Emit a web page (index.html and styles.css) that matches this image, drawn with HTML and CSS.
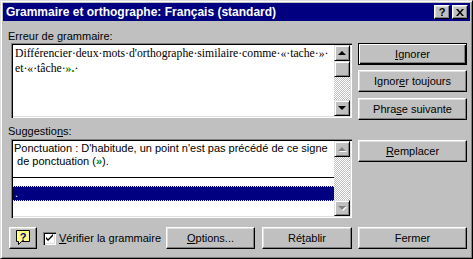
FILE: index.html
```html
<!DOCTYPE html>
<html lang="fr">

<head>
    <meta charset="utf-8">
    <title>Grammaire et orthographe</title>
    <link rel="stylesheet" href="styles.css">
</head>

<body>
    <div class="dialog">
        <div class="titlebar">
            <span class="title">Grammaire et orthographe: Français (standard)</span>
            <div class="caption-btns">
                <span class="cap cap-help">?</span>
                <span class="cap">
                    <svg width="8" height="7" viewBox="0 0 8 7">
                        <path d="M0 0h2l2 2.5 2-2.5h2L5 3.5 8 7H6L4 4.5 2 7H0l3-3.5z" fill="#000"/>
                    </svg>
                </span>
            </div>
        </div>

        <div class="content">
            <div class="main">
                <div class="left">
                    <div class="label">Erreur de <u>g</u>rammaire:</div>
                    <div class="field error-field">
                        <div class="error-text">Différencier·deux·mots·d'orthographe·similaire·comme·«·tache·»·<br>et·«·tâche·<span class="mark">».</span>·</div>
                        <div class="scrollbar">
                            <span class="sb-btn"><i class="arrow-up"></i></span>
                            <span class="sb-btn thumb"></span>
                            <span class="track"></span>
                            <span class="sb-btn"><i class="arrow-down"></i></span>
                        </div>
                    </div>

                    <div class="label sugg-label">Suggestio<u>n</u>s:</div>
                    <div class="field sugg-field">
                        <div class="sugg-list">
                            <div class="sugg-msg">Ponctuation : D'habitude, un point n'est pas précédé de ce signe<br>&nbsp;de ponctuation (<span class="mark">»</span>).</div>
                            <div class="sugg-rule"></div>
                            <div class="sugg-item">.</div>
                        </div>
                        <div class="scrollbar disabled">
                            <span class="sb-btn"><i class="arrow-up"></i></span>
                            <span class="track"></span>
                            <span class="sb-btn"><i class="arrow-down"></i></span>
                        </div>
                    </div>
                </div>

                <div class="right">
                    <span class="btn default"><u>I</u>gnorer</span>
                    <span class="btn">Ignor<u>e</u>r toujours</span>
                    <span class="btn btn-third">Phra<u>s</u>e suivante</span>
                    <span class="btn btn-replace"><u>R</u>emplacer</span>
                </div>
            </div>

            <div class="footer">
                <span class="btn help-btn">
                    <svg width="18" height="18" viewBox="0 0 18 18">
                        <path d="M2.5 1.5h13v11h-8l-3 3v-3h-2z" fill="#ffff80" stroke="#000"/>
                        <text x="9" y="11.5" text-anchor="middle" font-family="Liberation Sans, sans-serif" font-weight="bold" font-size="11" fill="#000080">?</text>
                    </svg>
                </span>
                <span class="checkbox">
                    <svg width="9" height="9" viewBox="0 0 9 9">
                        <path d="M1 3l2 2 5-5v2l-5 5-2-2z" fill="#000"/>
                    </svg>
                </span>
                <span class="check-label"><u>V</u>érifier la grammaire</span>
                <span class="btn btn-options"><u>O</u>ptions...</span>
                <span class="btn btn-undo">Ré<u>t</u>ablir</span>
                <span class="btn btn-close">Fermer</span>
            </div>
        </div>
    </div>
</body>

</html>
```

FILE: styles.css
```css
html,
body {
    margin: 0;
    padding: 0;
    background: #c0c0c0;
}

.dialog {
    box-sizing: border-box;
    width: 473px;
    height: 259px;
    padding: 2px;
    background: #c0c0c0;
    border: 1px solid;
    border-color: #dfdfdf #000 #000 #dfdfdf;
    box-shadow: inset 1px 1px #fff, inset -1px -1px #808080;
    font-family: "Liberation Sans", Arial, sans-serif;
    font-size: 11px;
    color: #000;
}

/* title bar */
.titlebar {
    height: 18px;
    background: #000080;
    display: flex;
    align-items: center;
    padding: 0 2px 0 3px;
}

.title {
    flex: 1;
    color: #fff;
    font-weight: bold;
    font-size: 12px;
    white-space: nowrap;
}

.caption-btns {
    display: flex;
    gap: 2px;
}

.cap {
    box-sizing: border-box;
    width: 16px;
    height: 14px;
    display: flex;
    align-items: center;
    justify-content: center;
    background: #c0c0c0;
    border: 1px solid;
    border-color: #fff #000 #000 #fff;
    box-shadow: inset -1px -1px #808080, inset 1px 1px #dfdfdf;
}

.cap-help {
    font-weight: bold;
    font-size: 11px;
    line-height: 1;
}

/* body */
.content {
    padding: 9px 3px 0 5px;
}

.main {
    display: grid;
    grid-template-columns: 344px 109px;
    column-gap: 6px;
}

.label {
    height: 13px;
    line-height: 13px;
    white-space: nowrap;
}

.sugg-label {
    margin-top: 7px;
    margin-bottom: 1px;
}

.field {
    box-sizing: border-box;
    margin-left: 3px;
    width: 341px;
    display: flex;
    padding: 2px;
    background: #fff;
    border: 0;
    overflow: hidden;
    box-shadow: inset 1px 1px #808080, inset 2px 2px #000, inset -1px -1px #fff, inset -2px -2px #dfdfdf;
}

.error-field {
    height: 75px;
}

.sugg-field {
    height: 79px;
}

.error-text {
    flex: 1;
    min-width: 0;
    padding: 1px 0 0 2px;
    font-family: "Liberation Serif", "Times New Roman", serif;
    font-size: 11.7px;
    line-height: 15px;
    white-space: nowrap;
}

.mark {
    color: #008000;
    font-weight: bold;
}

.sugg-list {
    flex: 1;
    min-width: 0;
    display: flex;
    flex-direction: column;
}

.sugg-msg {
    padding: 1px 0 0 1px;
    line-height: 13px;
    white-space: nowrap;
}

.sugg-rule {
    height: 1px;
    background: #000;
    margin-top: 9px;
}

.sugg-item {
    box-sizing: border-box;
    margin-top: 8px;
    height: 15px;
    line-height: 12px;
    padding-left: 2px;
    color: #fff;
    background: #000080;
    border-top: 1px dotted #ffff00;
    border-bottom: 1px dotted #ffff00;
}

/* scroll bar */
.scrollbar {
    flex: none;
    width: 16px;
    display: flex;
    flex-direction: column;
}

.sb-btn {
    box-sizing: border-box;
    width: 16px;
    height: 16px;
    display: flex;
    align-items: center;
    justify-content: center;
    background: #c0c0c0;
    border: 1px solid;
    border-color: #dfdfdf #000 #000 #dfdfdf;
    box-shadow: inset 1px 1px #fff, inset -1px -1px #808080;
}

.track {
    flex: 1;
    background: repeating-conic-gradient(#fff 0 25%, #c0c0c0 0 50%) 0 0 / 2px 2px;
}

.arrow-up,
.arrow-down {
    width: 0;
    height: 0;
    border-left: 4px solid transparent;
    border-right: 4px solid transparent;
}

.arrow-up {
    border-bottom: 4px solid #000;
}

.arrow-down {
    border-top: 4px solid #000;
}

.disabled .arrow-up {
    border-bottom-color: #808080;
    filter: drop-shadow(1px 1px 0 #fff);
}

.disabled .arrow-down {
    border-top-color: #808080;
    filter: drop-shadow(1px 1px 0 #fff);
}

/* buttons */
.right {
    display: flex;
    flex-direction: column;
    padding-top: 13px;
}

.btn {
    box-sizing: border-box;
    height: 22px;
    display: flex;
    align-items: center;
    justify-content: center;
    background: #c0c0c0;
    border: 1px solid;
    border-color: #fff #000 #000 #fff;
    box-shadow: inset -1px -1px #808080, inset 1px 1px #dfdfdf;
    white-space: nowrap;
}

.right .btn {
    margin-bottom: 5px;
}

.btn.default {
    border-color: #000;
    box-shadow: inset 1px 1px #fff, inset -1px -1px #000, inset -2px -2px #808080;
}

.btn-third {
    margin-top: 1px;
}

.btn-replace {
    margin-top: 15px;
}

/* footer */
.footer {
    display: flex;
    align-items: center;
    height: 22px;
    margin-top: 9px;
}

.help-btn {
    width: 28px;
    margin-left: 1px;
}

.checkbox {
    box-sizing: border-box;
    width: 13px;
    height: 13px;
    margin-left: 6px;
    display: flex;
    align-items: center;
    justify-content: center;
    background: #fff;
    box-shadow: inset 1px 1px #808080, inset 2px 2px #000, inset -1px -1px #fff, inset -2px -2px #dfdfdf;
}

.check-label {
    margin-left: 3px;
    white-space: nowrap;
}

.btn-options {
    width: 89px;
    margin-left: auto;
}

.btn-undo {
    width: 90px;
    margin-left: 7px;
}

.btn-close {
    width: 109px;
    margin-left: 6px;
}
```
